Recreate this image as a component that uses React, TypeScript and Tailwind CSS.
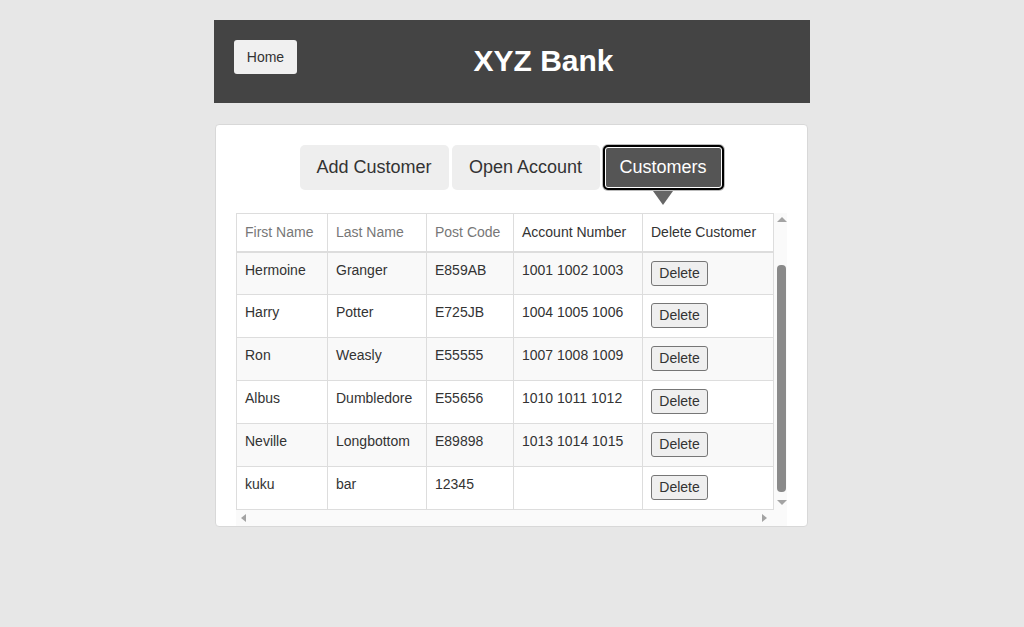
const customers = [
  { first: "Hermoine", last: "Granger", post: "E859AB", acc: "1001 1002 1003" },
  { first: "Harry", last: "Potter", post: "E725JB", acc: "1004 1005 1006" },
  { first: "Ron", last: "Weasly", post: "E55555", acc: "1007 1008 1009" },
  { first: "Albus", last: "Dumbledore", post: "E55656", acc: "1010 1011 1012" },
  { first: "Neville", last: "Longbottom", post: "E89898", acc: "1013 1014 1015" },
  { first: "kuku", last: "bar", post: "12345", acc: "" },
]

function Header() {
  return (
    <div className="mx-auto flex h-[83px] w-[596px] items-start bg-[#444444] px-5 pt-5">
      <button className="h-[34px] w-[63px] rounded-[3px] bg-[#f0f0f0] text-[14px] text-[#333]">Home</button>
      <h1 className="mt-[4px] flex-1 text-center text-[30px] leading-[34px] font-bold text-white">XYZ Bank</h1>
    </div>
  )
}

function Tabs() {
  return (
    <div className="flex justify-center gap-[3px]">
      <button className="h-[45px] w-[149px] rounded-[5px] bg-[#eeeeee] text-[18px] text-[#333]">Add Customer</button>
      <button className="h-[45px] w-[148px] rounded-[5px] bg-[#eeeeee] text-[18px] text-[#333]">Open Account</button>
      <div className="relative">
        <button className="h-[45px] w-[121px] rounded-[5px] border-2 border-black bg-[#555555] text-[18px] text-white shadow-[inset_0_0_0_1px_#fff,0_0_0_1px_#bbb]">
          Customers
        </button>
        {/* pointer under the active tab */}
        <div className="absolute left-1/2 top-[46px] h-0 w-0 -translate-x-1/2 border-x-[10px] border-t-[14px] border-x-transparent border-t-[#666]" />
      </div>
    </div>
  )
}

function CustomerTable() {
  return (
    <table className="w-[537px] table-fixed border-collapse text-[14px] text-[#333]">
      <colgroup>
        <col className="w-[91px]" />
        <col className="w-[99px]" />
        <col className="w-[87px]" />
        <col className="w-[129px]" />
        <col className="w-[131px]" />
      </colgroup>
      <thead>
        <tr className="h-[38px]">
          <td className="border border-b-2 border-[#dddddd] px-2 text-[#777]">First Name</td>
          <td className="border border-b-2 border-[#dddddd] px-2 text-[#777]">Last Name</td>
          <td className="border border-b-2 border-[#dddddd] px-2 text-[#777]">Post Code</td>
          <td className="border border-b-2 border-[#dddddd] px-2">Account Number</td>
          <td className="border border-b-2 border-[#dddddd] px-2">Delete Customer</td>
        </tr>
      </thead>
      <tbody>
        {customers.map((c, i) => (
          <tr key={i} className={i % 2 === 0 ? "h-[43px] bg-[#f9f9f9]" : "h-[43px] bg-white"}>
            <td className="border border-[#dddddd] px-2 pt-[7px] align-top">{c.first}</td>
            <td className="border border-[#dddddd] px-2 pt-[7px] align-top">{c.last}</td>
            <td className="border border-[#dddddd] px-2 pt-[7px] align-top">{c.post}</td>
            <td className="border border-[#dddddd] px-2 pt-[7px] align-top">{c.acc}</td>
            <td className="border border-[#dddddd] px-2 pt-[8px] align-top">
              <button className="h-[25px] w-[57px] rounded-[3px] border border-[#767676] bg-[#efefef] text-[14px] text-[#333]">
                Delete
              </button>
            </td>
          </tr>
        ))}
      </tbody>
    </table>
  )
}

function ScrollArea() {
  return (
    <div className="mt-[23px] flex w-[551px] flex-col">
      <div className="flex">
        <CustomerTable />
        <div className="relative w-[14px] bg-[#fafafa]">
          <div className="absolute left-[3px] top-[4px] h-0 w-0 border-x-[5px] border-b-[5px] border-x-transparent border-b-[#a3a3a3]" />
          <div className="absolute left-[3px] top-[52px] h-[227px] w-[9px] rounded-[4px] bg-[#8a8a8a]" />
          <div className="absolute bottom-[5px] left-[3px] h-0 w-0 border-x-[5px] border-t-[5px] border-x-transparent border-t-[#a3a3a3]" />
        </div>
      </div>
      <div className="relative h-[16px] bg-[#fafafa]">
        <div className="absolute left-[5px] top-[4px] h-0 w-0 border-y-[4px] border-r-[5px] border-y-transparent border-r-[#a3a3a3]" />
        <div className="absolute left-[526px] top-[4px] h-0 w-0 border-y-[4px] border-l-[5px] border-y-transparent border-l-[#a3a3a3]" />
      </div>
    </div>
  )
}

export default function App() {
  return (
    <div className="min-h-[627px] bg-[#e7e7e7] pt-5 font-['Liberation_Sans',Arial,sans-serif]">
      <Header />
      <div className="ml-[215px] mt-[21px] flex w-[593px] flex-col rounded-[4px] border border-[#d8d8d8] bg-white px-5 pt-5">
        <Tabs />
        <ScrollArea />
      </div>
    </div>
  )
}
